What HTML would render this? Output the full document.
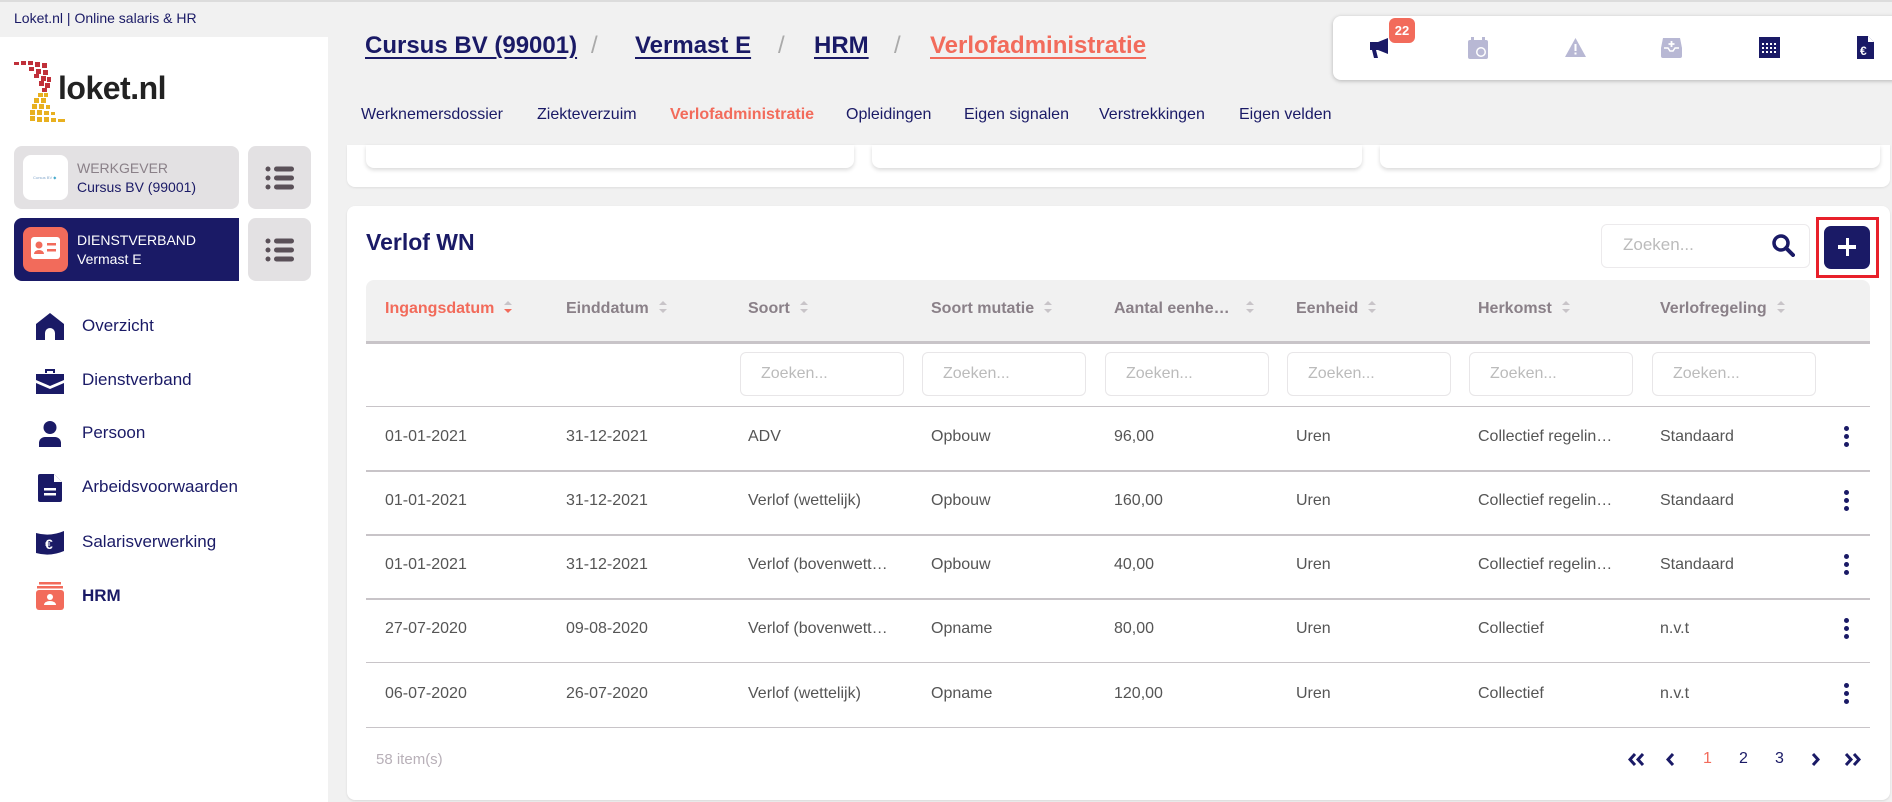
<!DOCTYPE html>
<html><head><meta charset="utf-8"><style>
*{box-sizing:border-box;margin:0;padding:0}
body{width:1892px;height:802px;background:#f1f1f1;font-family:"Liberation Sans",sans-serif;color:#1a1a66;position:relative;overflow:hidden}
.a{position:absolute}
.topline{left:0;top:0;width:1892px;height:2px;background:#dcdcdc}
.sb{left:0;top:37px;width:328px;height:765px;background:#fff}
.card{border-radius:8px}
.nav{left:82px;font-size:17px;color:#1a1a66}
.bc{top:32px;font-size:24px;font-weight:bold;text-decoration:underline;text-underline-offset:4px;color:#1a1a66}
.sl{top:32px;font-size:24px;color:#aaa}
.tab{top:106px;font-size:16px;color:#1a1a66}
.th{top:300px;font-size:16px;font-weight:bold;color:#8a8088}
.srt{display:inline-block;margin-left:10px;vertical-align:middle}
.td{font-size:16px;color:#555;white-space:nowrap;overflow:hidden;text-overflow:ellipsis;width:150px}
.inp{top:352px;width:164px;height:44px;border:1px solid #e8e6e8;border-radius:6px;background:#fff;font-size:16px;color:#bbb;padding:12px 0 0 20px}
.hl{left:366px;width:1504px;height:1px;background:#c8c4c8}
.keb{width:5px}
.keb i{display:block;width:5px;height:5px;border-radius:50%;background:#1a1a66;margin-bottom:3px}
.pg{top:750px;font-size:16px;color:#1a1a66}
</style></head><body>
<div class="a topline"></div>
<div class="a" style="left:14px;top:10px;font-size:14px;color:#1a1a66">Loket.nl | Online salaris &amp; HR</div>
<div class="a sb"></div>
<!-- logo -->
<svg class="a" style="left:14px;top:60px" width="54" height="64" viewBox="0 0 54 64">
<g fill="#c0303a">
<rect x="0" y="2" width="5" height="3"/><rect x="7" y="1" width="5" height="4"/><rect x="14" y="1" width="5" height="4"/><rect x="21" y="2" width="5" height="5"/><rect x="28" y="3" width="5" height="5"/>
<rect x="15" y="7" width="5" height="4"/><rect x="22" y="9" width="5" height="5"/><rect x="29" y="10" width="5" height="5"/>
<rect x="20" y="14" width="5" height="4"/><rect x="27" y="16" width="5" height="5"/><rect x="33" y="17" width="4" height="5"/>
<rect x="25" y="21" width="5" height="5"/><rect x="31" y="23" width="5" height="5"/>
<rect x="28" y="28" width="5" height="4"/>
</g>
<g fill="#e8b020">
<rect x="24" y="33" width="5" height="4"/><rect x="30" y="33" width="4" height="4"/>
<rect x="20" y="38" width="5" height="5"/><rect x="27" y="38" width="5" height="5"/>
<rect x="18" y="44" width="5" height="5"/><rect x="25" y="44" width="5" height="5"/><rect x="32" y="45" width="4" height="4"/>
<rect x="16" y="50" width="5" height="5"/><rect x="23" y="50" width="5" height="5"/><rect x="30" y="51" width="5" height="4"/><rect x="37" y="52" width="4" height="3"/>
<rect x="16" y="56" width="5" height="5"/><rect x="23" y="57" width="5" height="5"/><rect x="30" y="57" width="5" height="5"/><rect x="37" y="58" width="5" height="4"/><rect x="44" y="59" width="7" height="3"/>
</g>
</svg>
<div class="a" style="left:58px;top:70px;font-size:32px;font-weight:bold;color:#222;letter-spacing:-0.5px">loket.nl</div>
<!-- werkgever -->
<div class="a card" style="left:14px;top:146px;width:225px;height:63px;background:#e3e1e3"></div>
<div class="a card" style="left:23px;top:155px;width:45px;height:45px;background:#fff"></div>
<div class="a" style="left:33px;top:175px;font-size:4px;color:#8ac">Cursus BV <span style="color:#4ac">◆</span></div>
<div class="a" style="left:77px;top:160px;font-size:14px;color:#8a8088">WERKGEVER</div>
<div class="a" style="left:77px;top:179px;font-size:14px;color:#1a1a66">Cursus BV (99001)</div>
<div class="a card" style="left:248px;top:146px;width:63px;height:63px;background:#e3e1e3"></div>
<!-- dienstverband -->
<div class="a" style="left:14px;top:218px;width:225px;height:63px;background:#1a1a66;border-radius:8px 0 0 8px"></div>
<div class="a card" style="left:23px;top:227px;width:45px;height:45px;background:#f26b5b"></div>
<svg class="a" style="left:31px;top:237px" width="29" height="24" viewBox="0 0 29 24"><rect x="0" y="0" width="29" height="22" rx="3" fill="#fff"/><circle cx="8" cy="8" r="3.5" fill="#f26b5b"/><path d="M3 17a5 4 0 0 1 10 0z" fill="#f26b5b"/><rect x="16" y="6" width="9" height="2.5" fill="#f26b5b"/><rect x="16" y="12" width="9" height="2.5" fill="#f26b5b"/></svg>
<div class="a" style="left:77px;top:232px;font-size:14px;color:#fff">DIENSTVERBAND</div>
<div class="a" style="left:77px;top:251px;font-size:14px;color:#fff">Vermast E</div>
<div class="a card" style="left:248px;top:218px;width:63px;height:63px;background:#e3e1e3"></div>
<svg class="a" style="left:265px;top:166px" width="29" height="24" viewBox="0 0 29 24"><g fill="#5a5058"><circle cx="3" cy="3" r="2.5"/><circle cx="3" cy="12" r="2.5"/><circle cx="3" cy="21" r="2.5"/><rect x="9" y="0.5" width="20" height="5" rx="2.5"/><rect x="9" y="9.5" width="20" height="5" rx="2.5"/><rect x="9" y="18.5" width="20" height="5" rx="2.5"/></g></svg>
<svg class="a" style="left:265px;top:238px" width="29" height="24" viewBox="0 0 29 24"><g fill="#5a5058"><circle cx="3" cy="3" r="2.5"/><circle cx="3" cy="12" r="2.5"/><circle cx="3" cy="21" r="2.5"/><rect x="9" y="0.5" width="20" height="5" rx="2.5"/><rect x="9" y="9.5" width="20" height="5" rx="2.5"/><rect x="9" y="18.5" width="20" height="5" rx="2.5"/></g></svg>
<!-- nav -->
<svg class="a" style="left:36px;top:313px" width="28" height="28" viewBox="0 0 28 28"><path d="M14 0L28 11V27H19V20a5 5 0 0 0-10 0V27H0V11z" fill="#1a1a66"/></svg>
<div class="a nav" style="top:316px">Overzicht</div>
<svg class="a" style="left:36px;top:367px" width="28" height="27" viewBox="0 0 28 27"><path d="M9 6V2h10v4h-2V4h-6v2z" fill="#1a1a66"/><path d="M0 7h28v6L14 19 0 13z" fill="#1a1a66"/><path d="M0 16l14 6 14-6v11H0z" fill="#1a1a66"/></svg>
<div class="a nav" style="top:370px">Dienstverband</div>
<svg class="a" style="left:38px;top:421px" width="24" height="26" viewBox="0 0 24 26"><circle cx="12" cy="6.5" r="6.5" fill="#1a1a66"/><path d="M1 26v-4a6 6 0 0 1 6-6h10a6 6 0 0 1 6 6v4z" fill="#1a1a66"/></svg>
<div class="a nav" style="top:423px">Persoon</div>
<svg class="a" style="left:38px;top:474px" width="24" height="28" viewBox="0 0 24 28"><path d="M2 0h14l8 8v18a2 2 0 0 1-2 2H2a2 2 0 0 1-2-2V2a2 2 0 0 1 2-2z" fill="#1a1a66"/><path d="M16 0v8h8" fill="#fff"/><rect x="6" y="14" width="12" height="2.5" fill="#fff"/><rect x="6" y="19" width="12" height="2.5" fill="#fff"/></svg>
<div class="a nav" style="top:477px">Arbeidsvoorwaarden</div>
<svg class="a" style="left:36px;top:531px" width="28" height="24" viewBox="0 0 28 24"><path d="M0 2Q14 6 28 0V20Q14 26 0 22z" fill="#1a1a66"/><text x="9" y="18" font-size="14" font-weight="bold" fill="#fff" font-family="Liberation Sans">€</text></svg>
<div class="a nav" style="top:532px">Salarisverwerking</div>
<svg class="a" style="left:36px;top:582px" width="28" height="28" viewBox="0 0 28 28"><rect x="3" y="0" width="22" height="2.5" fill="#f26b5b"/><rect x="1" y="4" width="26" height="2.5" fill="#f26b5b"/><rect x="0" y="8" width="28" height="20" rx="3" fill="#f26b5b"/><circle cx="14" cy="15" r="3" fill="#fff"/><path d="M8 23a6 4 0 0 1 12 0z" fill="#fff"/></svg>
<div class="a nav" style="top:586px;font-weight:bold">HRM</div>
<!-- breadcrumb -->
<div class="a bc" style="left:365px">Cursus BV (99001)</div>
<div class="a sl" style="left:591px">/</div>
<div class="a bc" style="left:635px">Vermast E</div>
<div class="a sl" style="left:778px">/</div>
<div class="a bc" style="left:814px">HRM</div>
<div class="a sl" style="left:894px">/</div>
<div class="a bc" style="left:930px;color:#f26b5b">Verlofadministratie</div>
<!-- icon bar -->
<div class="a" style="left:1333px;top:16px;width:580px;height:64px;background:#fff;border-radius:8px;box-shadow:0 1px 4px rgba(0,0,0,.25)"></div>
<svg class="a" style="left:1370px;top:38px" width="22" height="22" viewBox="0 0 22 22"><path d="M0 4h8l10-4v16L8 12H6l2 8H4L2 12H0z" fill="#1a1a66"/></svg>
<div class="a" style="left:1389px;top:18px;width:26px;height:25px;background:#f26b5b;border-radius:6px;color:#fff;font-size:13px;font-weight:bold;text-align:center;line-height:25px">22</div>
<svg class="a" style="left:1468px;top:37px" width="20" height="22" viewBox="0 0 20 22"><rect x="0" y="3" width="20" height="19" rx="2" fill="#b8b8d4"/><rect x="3" y="0" width="3" height="5" fill="#b8b8d4"/><rect x="14" y="0" width="3" height="5" fill="#b8b8d4"/><circle cx="13" cy="15" r="5" fill="#fff"/><circle cx="13" cy="15" r="3.5" fill="#b8b8d4"/></svg>
<svg class="a" style="left:1565px;top:38px" width="21" height="19" viewBox="0 0 21 19"><path d="M10.5 0L21 19H0z" fill="#b8b8d4"/><rect x="9.5" y="6" width="2" height="7" fill="#fff"/><rect x="9.5" y="14.5" width="2" height="2" fill="#fff"/></svg>
<svg class="a" style="left:1661px;top:38px" width="21" height="20" viewBox="0 0 21 20"><path d="M2 0h17l2 10v8a2 2 0 0 1-2 2H2a2 2 0 0 1-2-2v-8z" fill="#b8b8d4"/><path d="M3 10h4l2 3h3l2-3h4" stroke="#fff" stroke-width="1.5" fill="none"/><path d="M10.5 3v6M7.5 6h6" stroke="#fff" stroke-width="1.8"/></svg>
<svg class="a" style="left:1759px;top:37px" width="21" height="21" viewBox="0 0 21 21"><rect width="21" height="21" fill="#1a1a66"/><g fill="#fff"><rect x="3" y="6" width="2" height="2"/><rect x="7" y="6" width="2" height="2"/><rect x="11" y="6" width="2" height="2"/><rect x="15" y="6" width="2" height="2"/><rect x="3" y="10" width="2" height="2"/><rect x="7" y="10" width="2" height="2"/><rect x="11" y="10" width="2" height="2"/><rect x="15" y="10" width="2" height="2"/><rect x="3" y="14" width="2" height="2"/><rect x="7" y="14" width="2" height="2"/><rect x="11" y="14" width="2" height="2"/><rect x="15" y="14" width="2" height="2"/></g></svg>
<svg class="a" style="left:1857px;top:36px" width="17" height="23" viewBox="0 0 17 23"><path d="M0 0h11l6 6v17H0z" fill="#1a1a66"/><path d="M11 0v6h6" fill="#fff"/><text x="3" y="19" font-size="12" font-weight="bold" fill="#fff" font-family="Liberation Sans">€</text></svg>
<!-- tabs -->
<div class="a tab" style="left:361px">Werknemersdossier</div>
<div class="a tab" style="left:537px">Ziekteverzuim</div>
<div class="a tab" style="left:670px;color:#f26b5b;font-weight:bold">Verlofadministratie</div>
<div class="a tab" style="left:846px">Opleidingen</div>
<div class="a tab" style="left:964px">Eigen signalen</div>
<div class="a tab" style="left:1099px">Verstrekkingen</div>
<div class="a tab" style="left:1239px">Eigen velden</div>
<!-- top cards -->
<div class="a" style="left:347px;top:145px;width:1543px;height:42px;background:#fff;border-radius:0 0 8px 8px;box-shadow:0 1px 2px rgba(0,0,0,.08)"></div>
<div class="a" style="left:366px;top:145px;width:488px;height:23px;background:#fff;border-radius:0 0 8px 8px;box-shadow:0 2px 4px rgba(0,0,0,.15)"></div>
<div class="a" style="left:872px;top:145px;width:490px;height:23px;background:#fff;border-radius:0 0 8px 8px;box-shadow:0 2px 4px rgba(0,0,0,.15)"></div>
<div class="a" style="left:1380px;top:145px;width:500px;height:23px;background:#fff;border-radius:0 0 8px 8px;box-shadow:0 2px 4px rgba(0,0,0,.15)"></div>
<!-- main card -->
<div class="a" style="left:347px;top:206px;width:1543px;height:594px;background:#fff;border-radius:8px;box-shadow:0 1px 2px rgba(0,0,0,.1)"></div>
<div class="a" style="left:366px;top:229px;font-size:23px;font-weight:bold;color:#1a1a66">Verlof WN</div>
<div class="a" style="left:1601px;top:224px;width:209px;height:44px;border:1px solid #eceaec;border-radius:6px"></div>
<div class="a" style="left:1623px;top:235px;font-size:17px;color:#bbb">Zoeken...</div>
<svg class="a" style="left:1771px;top:233px" width="24" height="24" viewBox="0 0 24 24"><circle cx="10" cy="10" r="7" stroke="#1a1a66" stroke-width="3.5" fill="none"/><path d="M15 15l7 7" stroke="#1a1a66" stroke-width="4" stroke-linecap="round"/></svg>
<div class="a" style="left:1816px;top:217px;width:63px;height:61px;border:3px solid #e8202a"></div>
<div class="a" style="left:1824px;top:226px;width:46px;height:43px;background:#1a1a66;border-radius:7px"></div>
<div class="a" style="left:1838px;top:238px;width:18px;height:3.5px;background:#fff;margin-top:7px"></div>
<div class="a" style="left:1845.5px;top:238px;width:3.5px;height:18px;background:#fff"></div>
<!-- table header -->
<div class="a" style="left:366px;top:280px;width:1504px;height:62px;background:#f1f1f1;border-radius:8px 8px 0 0"></div>
<div class="a" style="left:366px;top:341px;width:1504px;height:3px;background:#c8c4c8"></div>
<div class="a th" style="left:385px;color:#f26b5b">Ingangsdatum<span class="srt"><svg width="8" height="12" viewBox="0 0 8 12"><path d="M4 0l4 4H0z" fill="#c8c4c8"/><path d="M4 12l4-4H0z" fill="#f26b5b"/></svg></span></div>
<div class="a th" style="left:566px">Einddatum<span class="srt"><svg width="8" height="12" viewBox="0 0 8 12"><path d="M4 0l4 4H0zM4 12l4-4H0z" fill="#c8c4c8"/></svg></span></div>
<div class="a th" style="left:748px">Soort<span class="srt"><svg width="8" height="12" viewBox="0 0 8 12"><path d="M4 0l4 4H0zM4 12l4-4H0z" fill="#c8c4c8"/></svg></span></div>
<div class="a th" style="left:931px">Soort mutatie<span class="srt"><svg width="8" height="12" viewBox="0 0 8 12"><path d="M4 0l4 4H0zM4 12l4-4H0z" fill="#c8c4c8"/></svg></span></div>
<div class="a th" style="left:1114px"><span style="display:inline-block;width:122px;overflow:hidden;text-overflow:ellipsis;white-space:nowrap;vertical-align:bottom">Aantal eenheden</span><span class="srt"><svg width="8" height="12" viewBox="0 0 8 12"><path d="M4 0l4 4H0zM4 12l4-4H0z" fill="#c8c4c8"/></svg></span></div>
<div class="a th" style="left:1296px">Eenheid<span class="srt"><svg width="8" height="12" viewBox="0 0 8 12"><path d="M4 0l4 4H0zM4 12l4-4H0z" fill="#c8c4c8"/></svg></span></div>
<div class="a th" style="left:1478px">Herkomst<span class="srt"><svg width="8" height="12" viewBox="0 0 8 12"><path d="M4 0l4 4H0zM4 12l4-4H0z" fill="#c8c4c8"/></svg></span></div>
<div class="a th" style="left:1660px">Verlofregeling<span class="srt"><svg width="8" height="12" viewBox="0 0 8 12"><path d="M4 0l4 4H0zM4 12l4-4H0z" fill="#c8c4c8"/></svg></span></div>
<!-- filters -->
<div class="a inp" style="left:740px">Zoeken...</div>
<div class="a inp" style="left:922px">Zoeken...</div>
<div class="a inp" style="left:1105px">Zoeken...</div>
<div class="a inp" style="left:1287px">Zoeken...</div>
<div class="a inp" style="left:1469px">Zoeken...</div>
<div class="a inp" style="left:1652px">Zoeken...</div>
<div class="a hl" style="top:406px"></div>
<div class="a hl" style="top:470px;height:2px"></div>
<div class="a hl" style="top:534px;height:2px"></div>
<div class="a hl" style="top:598px;height:2px"></div>
<div class="a hl" style="top:662px"></div>
<div class="a hl" style="top:727px"></div>
<!-- rows -->
<div class="a" style="left:0;top:428px">
<div class="a td" style="left:385px">01-01-2021</div><div class="a td" style="left:566px">31-12-2021</div><div class="a td" style="left:748px">ADV</div><div class="a td" style="left:931px">Opbouw</div><div class="a td" style="left:1114px">96,00</div><div class="a td" style="left:1296px">Uren</div><div class="a td" style="left:1478px;width:143px">Collectief regelingen</div><div class="a td" style="left:1660px">Standaard</div><div class="a keb" style="left:1844px;top:-2px"><i></i><i></i><i></i></div></div>
<div class="a" style="left:0;top:492px">
<div class="a td" style="left:385px">01-01-2021</div><div class="a td" style="left:566px">31-12-2021</div><div class="a td" style="left:748px">Verlof (wettelijk)</div><div class="a td" style="left:931px">Opbouw</div><div class="a td" style="left:1114px">160,00</div><div class="a td" style="left:1296px">Uren</div><div class="a td" style="left:1478px;width:143px">Collectief regelingen</div><div class="a td" style="left:1660px">Standaard</div><div class="a keb" style="left:1844px;top:-2px"><i></i><i></i><i></i></div></div>
<div class="a" style="left:0;top:556px">
<div class="a td" style="left:385px">01-01-2021</div><div class="a td" style="left:566px">31-12-2021</div><div class="a td" style="left:748px;width:147px">Verlof (bovenwettelijk)</div><div class="a td" style="left:931px">Opbouw</div><div class="a td" style="left:1114px">40,00</div><div class="a td" style="left:1296px">Uren</div><div class="a td" style="left:1478px;width:143px">Collectief regelingen</div><div class="a td" style="left:1660px">Standaard</div><div class="a keb" style="left:1844px;top:-2px"><i></i><i></i><i></i></div></div>
<div class="a" style="left:0;top:620px">
<div class="a td" style="left:385px">27-07-2020</div><div class="a td" style="left:566px">09-08-2020</div><div class="a td" style="left:748px;width:147px">Verlof (bovenwettelijk)</div><div class="a td" style="left:931px">Opname</div><div class="a td" style="left:1114px">80,00</div><div class="a td" style="left:1296px">Uren</div><div class="a td" style="left:1478px">Collectief</div><div class="a td" style="left:1660px">n.v.t</div><div class="a keb" style="left:1844px;top:-2px"><i></i><i></i><i></i></div></div>
<div class="a" style="left:0;top:685px">
<div class="a td" style="left:385px">06-07-2020</div><div class="a td" style="left:566px">26-07-2020</div><div class="a td" style="left:748px">Verlof (wettelijk)</div><div class="a td" style="left:931px">Opname</div><div class="a td" style="left:1114px">120,00</div><div class="a td" style="left:1296px">Uren</div><div class="a td" style="left:1478px">Collectief</div><div class="a td" style="left:1660px">n.v.t</div><div class="a keb" style="left:1844px;top:-2px"><i></i><i></i><i></i></div></div>
<!-- footer -->
<div class="a" style="left:376px;top:751px;font-size:15px;color:#b8b0b8">58 item(s)</div>
<svg class="a" style="left:1628px;top:753px" width="18" height="13" viewBox="0 0 18 13"><path d="M7 1L2 6.5 7 12M15 1l-5 5.5 5 5.5" stroke="#1a1a66" stroke-width="3" fill="none"/></svg>
<svg class="a" style="left:1666px;top:753px" width="10" height="13" viewBox="0 0 10 13"><path d="M7 1L2 6.5 7 12" stroke="#1a1a66" stroke-width="3" fill="none"/></svg>
<div class="a pg" style="left:1703px;color:#f26b5b">1</div>
<div class="a pg" style="left:1739px">2</div>
<div class="a pg" style="left:1775px">3</div>
<svg class="a" style="left:1810px;top:753px" width="10" height="13" viewBox="0 0 10 13"><path d="M3 1l5 5.5L3 12" stroke="#1a1a66" stroke-width="3" fill="none"/></svg>
<svg class="a" style="left:1843px;top:753px" width="18" height="13" viewBox="0 0 18 13"><path d="M3 1l5 5.5L3 12M11 1l5 5.5-5 5.5" stroke="#1a1a66" stroke-width="3" fill="none"/></svg>
</body></html>
